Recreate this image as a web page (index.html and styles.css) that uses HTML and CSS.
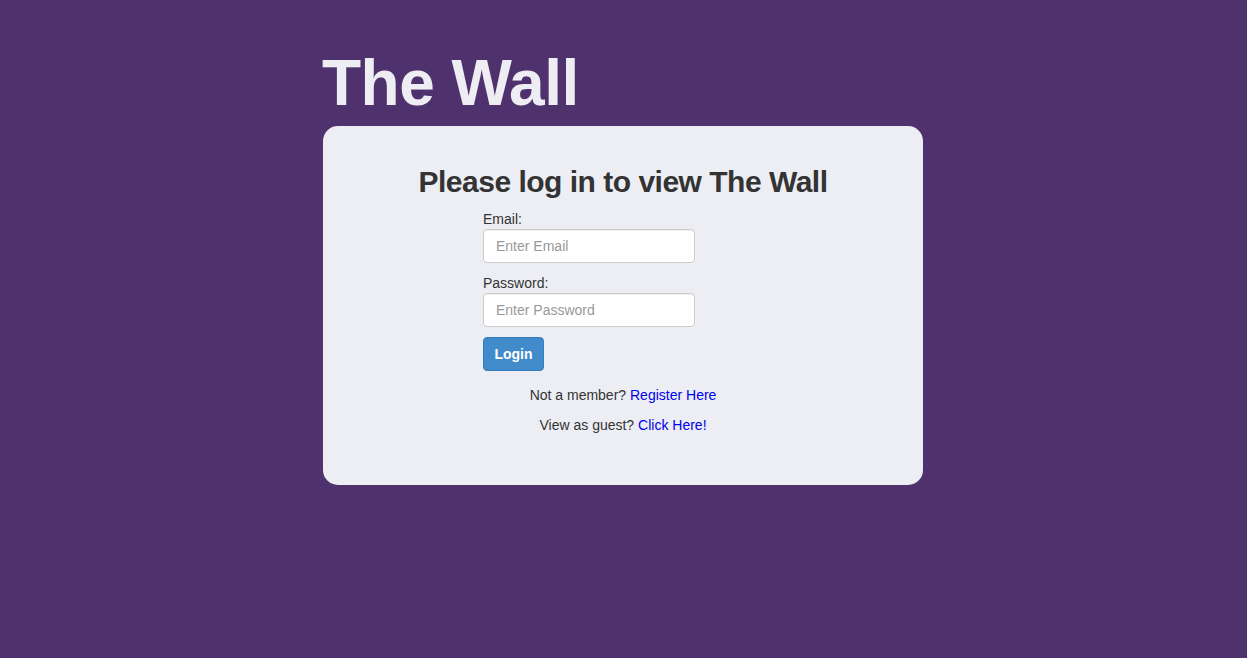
FILE: index.html
```html
<!DOCTYPE html>
<html lang="en">
<head>
<meta charset="utf-8">
<title>The Wall</title>
<link rel="stylesheet" href="styles.css">
</head>
<body>
<div class="page">
  <h1 class="site-title">The Wall</h1>
  <div class="card">
    <h2 class="card-title">Please log in to view The Wall</h2>
    <form class="login-form">
      <div class="form-group">
        <label class="form-label" for="email">Email:</label>
        <input class="form-control" id="email" type="text" placeholder="Enter Email">
      </div>
      <div class="form-group">
        <label class="form-label" for="password">Password:</label>
        <input class="form-control" id="password" type="password" placeholder="Enter Password">
      </div>
      <button class="btn-login" type="button">Login</button>
    </form>
    <div class="links">
      <p class="link-line">Not a member? <a href="#">Register Here</a></p>
      <p class="link-line">View as guest? <a href="#">Click Here!</a></p>
    </div>
  </div>
</div>
</body>
</html>
```
FILE: styles.css
```css
html, body {
  margin: 0;
  padding: 0;
}
body {
  background: #4f326d;
  font-family: "Liberation Sans", Arial, Helvetica, sans-serif;
  font-size: 14px;
  line-height: 20px;
  color: #333;
  min-height: 658px;
}
.page {
  width: 601px;
  margin: 0 auto;
  padding-top: 48px;
}
.site-title {
  margin: 0 0 8px -1px;
  font-size: 64px;
  line-height: 70px;
  font-weight: bold;
  letter-spacing: -0.5px;
  color: #eeedf4;
}
.card {
  width: 600px;
  background: #edeef3;
  border-radius: 15px;
  padding: 39px 0 40px;
}
.card-title {
  margin: 0 0 11px 0;
  text-align: center;
  font-size: 30px;
  line-height: 33px;
  font-weight: bold;
  letter-spacing: -0.5px;
  color: #333;
}
.login-form {
  width: 280px;
  margin: 0 auto;
}
.form-group {
  margin-bottom: 10px;
}
.form-label {
  display: block;
  font-weight: normal;
  color: #333;
}
.form-control {
  display: block;
  box-sizing: border-box;
  width: 212px;
  height: 34px;
  padding: 6px 12px;
  font-family: inherit;
  font-size: 14px;
  color: #555;
  background: #fff;
  border: 1px solid #ccc;
  border-radius: 4px;
  box-shadow: inset 0 1px 1px rgba(0,0,0,0.075);
  outline: none;
}
.form-control::placeholder {
  color: #999;
}
.btn-login {
  display: block;
  box-sizing: border-box;
  width: 61px;
  height: 34px;
  padding: 6px 0;
  font-family: inherit;
  font-size: 14px;
  font-weight: bold;
  color: #fff;
  background: #428bca;
  border: 1px solid #357ebd;
  border-radius: 4px;
}
.links {
  margin-top: 14px;
  text-align: center;
}
.link-line {
  margin: 0 0 10px 0;
}
.link-line a {
  color: #0000ee;
  text-decoration: none;
}
```
